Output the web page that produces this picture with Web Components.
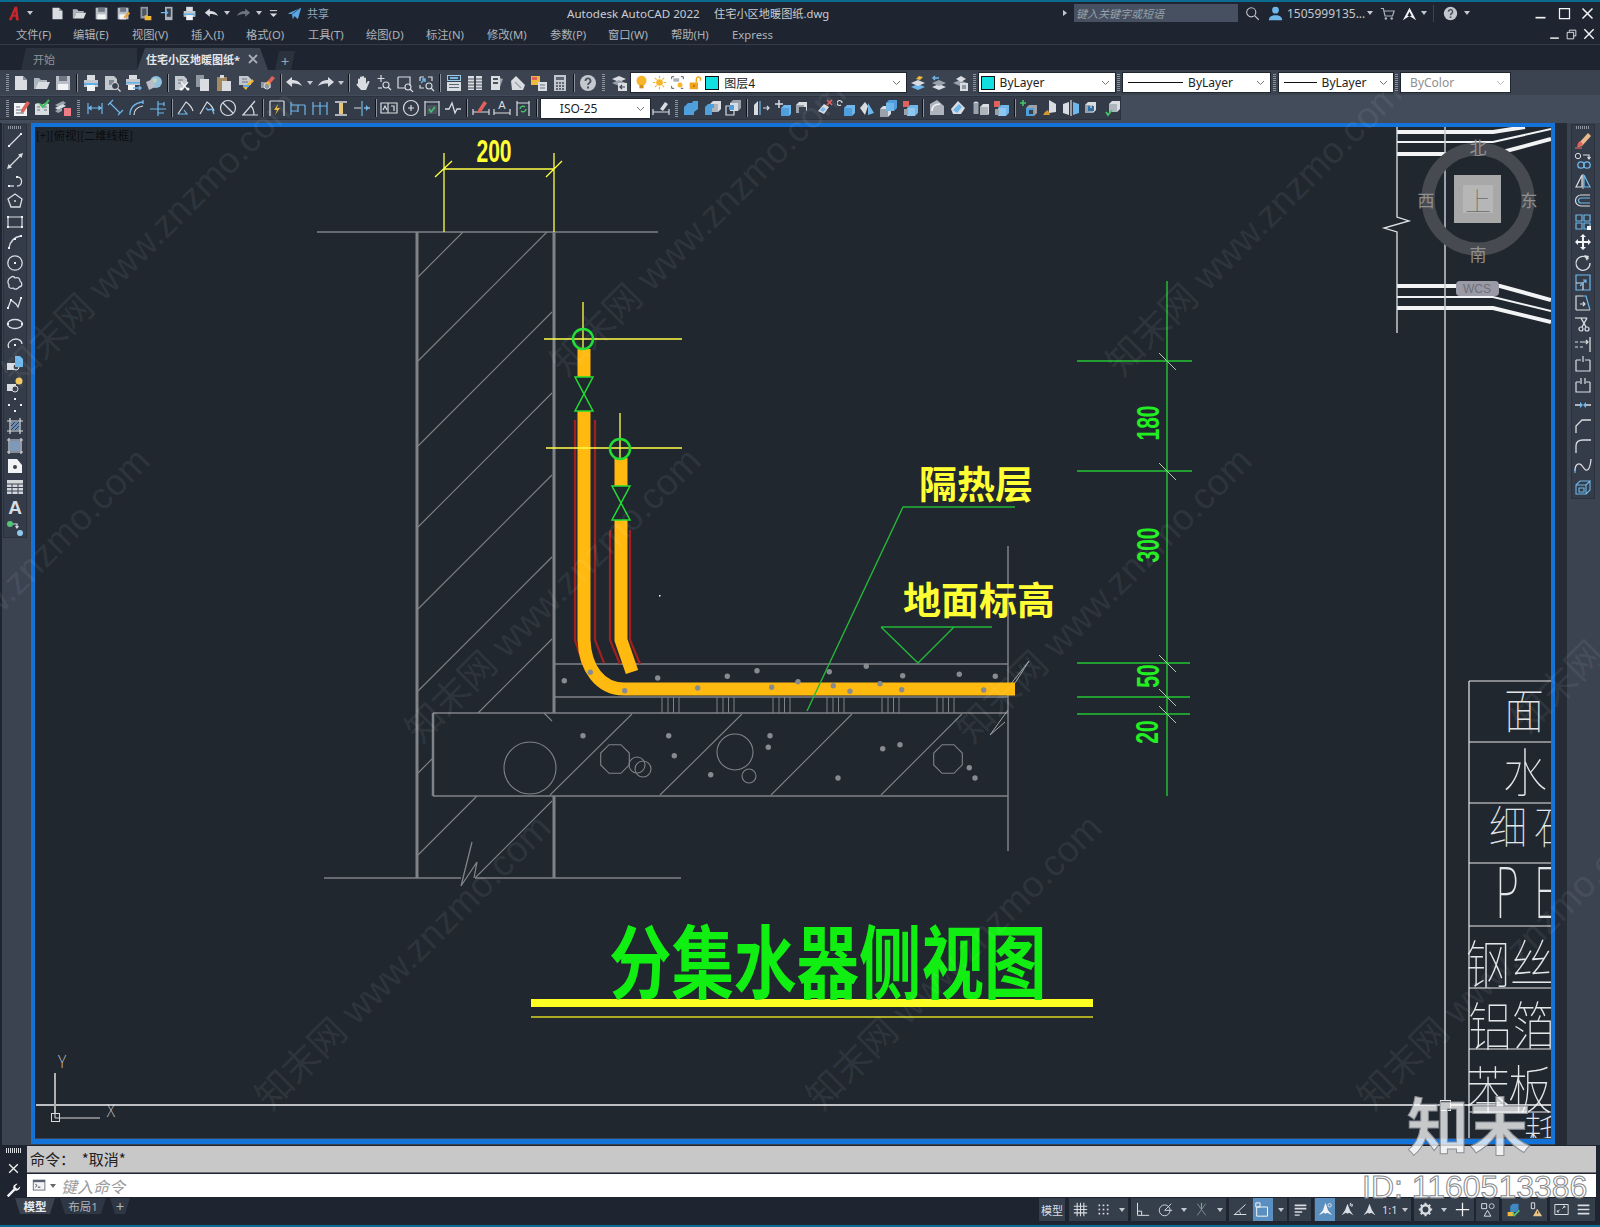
<!DOCTYPE html>
<html lang="zh">
<head>
<meta charset="utf-8">
<title>Autodesk AutoCAD 2022</title>
<style>
    html, body { margin: 0; height: 100%; background: #1f2530; overflow: hidden; }
    body { font-family: "Noto Sans", "Noto Sans CJK SC", sans-serif; }
</style>
</head>
<body>
<cad-app>
    <cad-titlebar></cad-titlebar>
    <cad-menubar></cad-menubar>
    <cad-tabs></cad-tabs>
    <cad-ribbon>
        <cad-toolbar>
            <cad-grip></cad-grip>
            <cad-icon name="new"></cad-icon><cad-icon name="open"></cad-icon><cad-icon name="save"></cad-icon><cad-sep></cad-sep>
            <cad-icon name="print"></cad-icon><cad-icon name="preview"></cad-icon><cad-icon name="plot"></cad-icon><cad-icon name="publish"></cad-icon><cad-sep></cad-sep>
            <cad-icon name="cut"></cad-icon><cad-icon name="copy"></cad-icon><cad-icon name="paste"></cad-icon><cad-icon name="match"></cad-icon><cad-icon name="block"></cad-icon><cad-sep></cad-sep>
            <cad-icon name="undo"></cad-icon><cad-drop></cad-drop><cad-icon name="redo"></cad-icon><cad-drop></cad-drop><cad-sep></cad-sep>
            <cad-icon name="pan"></cad-icon><cad-icon name="zoomrt"></cad-icon><cad-icon name="zoomw"></cad-icon><cad-icon name="zoomp"></cad-icon><cad-sep></cad-sep>
            <cad-icon name="props"></cad-icon><cad-icon name="design"></cad-icon><cad-icon name="palette"></cad-icon><cad-icon name="sheet"></cad-icon><cad-icon name="markup"></cad-icon><cad-icon name="calc"></cad-icon><cad-sep></cad-sep>
            <cad-icon name="help"></cad-icon><cad-grip wide></cad-grip>
            <cad-icon name="layerprev"></cad-icon>
            <cad-combo w="277">
                <cad-icon name="bulb" size="15"></cad-icon><cad-icon name="sun" size="15"></cad-icon><cad-icon name="frame" size="15"></cad-icon><cad-icon name="lock" size="15"></cad-icon><cad-swatch></cad-swatch>图层4
            </cad-combo>
            <cad-icon name="layers1"></cad-icon><cad-icon name="layers2"></cad-icon><cad-icon name="layers3"></cad-icon><cad-grip></cad-grip>
            <cad-combo w="138"><cad-swatch></cad-swatch>ByLayer</cad-combo><cad-grip></cad-grip>
            <cad-combo w="149"><cad-rule w="55"></cad-rule>ByLayer</cad-combo><cad-grip></cad-grip>
            <cad-combo w="116"><cad-rule w="33"></cad-rule>ByLayer</cad-combo><cad-grip></cad-grip>
            <cad-combo w="111" muted>ByColor</cad-combo>
        </cad-toolbar>
        <cad-toolbar second>
            <cad-grip></cad-grip>
            <cad-icon name="edittext"></cad-icon><cad-icon name="checkbook"></cad-icon><cad-icon name="layerred"></cad-icon><cad-grip wide></cad-grip>
            <cad-icon name="dimlin"></cad-icon><cad-icon name="dimali"></cad-icon><cad-icon name="dimarc"></cad-icon><cad-icon name="dimord"></cad-icon><cad-sep></cad-sep>
            <cad-icon name="dimrad"></cad-icon><cad-icon name="dimjog"></cad-icon><cad-icon name="dimdia"></cad-icon><cad-icon name="dimang"></cad-icon><cad-sep></cad-sep>
            <cad-icon name="dimq"></cad-icon><cad-icon name="dimbase"></cad-icon><cad-icon name="dimcont"></cad-icon><cad-icon name="dimspace"></cad-icon><cad-icon name="dimbreak"></cad-icon><cad-sep></cad-sep>
            <cad-icon name="tol"></cad-icon><cad-icon name="center"></cad-icon><cad-icon name="inspect"></cad-icon><cad-icon name="jog"></cad-icon><cad-sep></cad-sep>
            <cad-icon name="dimedit"></cad-icon><cad-icon name="dimtext"></cad-icon><cad-icon name="dimup"></cad-icon><cad-sep></cad-sep>
            <cad-combo w="111" small>ISO-25</cad-combo>
            <cad-icon name="dimstyle"></cad-icon><cad-grip narrow></cad-grip>
            <cad-icon name="union"></cad-icon><cad-icon name="subtract"></cad-icon><cad-icon name="intersect"></cad-icon><cad-sep></cad-sep>
            <cad-icon name="s1"></cad-icon><cad-icon name="s2"></cad-icon><cad-icon name="s3"></cad-icon><cad-icon name="s4"></cad-icon><cad-icon name="s5"></cad-icon><cad-icon name="s6"></cad-icon><cad-icon name="s7"></cad-icon><cad-icon name="s8"></cad-icon><cad-sep></cad-sep>
            <cad-icon name="s9"></cad-icon><cad-icon name="s10"></cad-icon><cad-icon name="s11"></cad-icon><cad-icon name="s8"></cad-icon><cad-sep></cad-sep>
            <cad-icon name="s12"></cad-icon><cad-icon name="s13"></cad-icon><cad-icon name="s14"></cad-icon><cad-icon name="s15"></cad-icon><cad-icon name="s16"></cad-icon>
        </cad-toolbar>
    </cad-ribbon>
    <cad-workspace>
        <cad-rail slot="left">
            <cad-icon name="line" tall></cad-icon><cad-icon name="xline" tall></cad-icon><cad-icon name="pline" tall></cad-icon><cad-icon name="polygon" tall></cad-icon><cad-icon name="rect" tall></cad-icon><cad-icon name="arc" tall></cad-icon><cad-icon name="circle" tall></cad-icon><cad-icon name="cloud" tall></cad-icon><cad-icon name="spline" tall></cad-icon><cad-icon name="ellipse" tall></cad-icon><cad-icon name="ellarc" tall></cad-icon><cad-icon name="insert" tall></cad-icon><cad-icon name="mkblock" tall></cad-icon><cad-icon name="point" tall></cad-icon><cad-icon name="hatch" tall></cad-icon><cad-icon name="gradient" tall></cad-icon><cad-icon name="region" tall></cad-icon><cad-icon name="table" tall></cad-icon><cad-icon name="mtext" tall></cad-icon><cad-icon name="addsel" tall></cad-icon>
        </cad-rail>
        <cad-viewport></cad-viewport>
        <cad-rail slot="right" right>
            <cad-icon name="erase" tall></cad-icon><cad-icon name="copyobj" tall></cad-icon><cad-icon name="mirror" tall></cad-icon><cad-icon name="offset" tall></cad-icon><cad-icon name="array" tall></cad-icon><cad-icon name="move" tall></cad-icon><cad-icon name="rotate" tall></cad-icon><cad-icon name="scale" tall></cad-icon><cad-icon name="stretch" tall></cad-icon><cad-icon name="trim" tall></cad-icon><cad-icon name="extend" tall></cad-icon><cad-icon name="breakpt" tall></cad-icon><cad-icon name="break" tall></cad-icon><cad-icon name="join" tall></cad-icon><cad-icon name="chamfer" tall></cad-icon><cad-icon name="fillet" tall></cad-icon><cad-icon name="blend" tall></cad-icon><cad-icon name="explode" tall></cad-icon>
        </cad-rail>
    </cad-workspace>
    <cad-command></cad-command>
    <cad-status></cad-status>
    <cad-watermark></cad-watermark>
</cad-app>

<script>
const LT = '#d9dce1', GR = '#9aa2ac', BL = '#6fb7ea', YE = '#f0b93a', RD = '#e0625c', WH = '#f2f3f5';
const st = (d, c = LT, w = 1.2) => `<path d="${d}" fill="none" stroke="${c}" stroke-width="${w}"/>`;
const fl = (d, c = LT) => `<path d="${d}" fill="${c}"/>`;
const dt = (x, y, c = '#eef0f3') => `<rect x="${x - 1}" y="${y - 1}" width="2" height="2" fill="${c}"/>`;
const lens = (x, y) => `<circle cx="${x}" cy="${y}" r="3" fill="none" stroke="${LT}" stroke-width="1.1"/>` + st(`M${x + 2} ${y + 2}l3 3`);
const dim = inner => st('M2 4v11M16 4v11', BL) + inner;
const box3 = (x, y, c1, c2) => fl(`M${x} ${y + 3}l3-3h8v8l-3 3H${x}z`, c1) + fl(`M${x} ${y + 3}h8v8H${x}z`, c2);

const ICONS = {
    logo: fl('M1 17L8 1h3l2 16H9.5l-.3-4H6l-1.7 4z', '#c9262c') + fl('M7 10.5h2l-.2-4z', '#1f2530'),
    new: fl('M3 2h8l4 4v10H3z') + fl('M11 2l4 4h-4z', '#858d98'),
    open: fl('M1 15V4h5l2 2h6v2H5L3 15z', '#aeb4bc') + fl('M5 8h12l-3 7H2.5z'),
    save: fl('M2 2h14v14H2z', '#b9bec6') + fl('M5 2h8v5H5z', '#6f7783') + fl('M4 10h10v6H4z', WH),
    saveas: fl('M2 2h13v14H2z', '#b9bec6') + fl('M5 2h7v5H5z', '#6f7783') + fl('M4 10h8v6H4z', WH) + fl('M9 15l1-3 5-5 2 2-5 5z', '#e9a13b'),
    sheetset: fl('M3 1h9v14H3z', '#8f97a1') + fl('M5 3h5v9H5z', '#4e5663') + fl('M8 11h3l1 1h4v5H8z', YE),
    mobile: fl('M6 1h9v16H6z', '#aeb4bc') + fl('M8 3h5v10H8z', '#39414d') + st('M1 8h8M7 6l2 2-2 2', BL, 1.5),
    print: fl('M5 1h8v5H5z') + fl('M2 6h14v7H2z', '#c3c8ce') + fl('M2 9h14v2H2z', '#5fb0e8') + fl('M5 11h8v6H5z', WH),
    undo: fl('M1 8l6-5v3c5 0 8 2 10 6-3-2-6-2.5-10-2.5V13z'),
    redo: fl('M17 8l-6-5v3C6 6 3 8 1 12c3-2 6-2.5 10-2.5V13z'),
    redooff: fl('M17 8l-6-5v3C6 6 3 8 1 12c3-2 6-2.5 10-2.5V13z', '#6b7380'),
    customize: st('M4 5h10', LT, 1.4) + fl('M4 9h10l-5 5z'),
    share: fl('M1 9L17 2l-4 14-4-4-2 4-1-6z', '#5aa9e6') + st('M6 10l9-7', '#1f2530', .8),
    preview: fl('M2 2h9l3 3v11H2z', '#c3c8ce') + fl('M6 6h5v5H6z', '#7f8792') + `<circle cx="12" cy="12" r="3.5" fill="#39414d" stroke="${LT}"/>` + st('M14.5 14.5l3 3'),
    plot: fl('M5 1h8v4H5z') + fl('M2 5h14v6H2z', '#c3c8ce') + fl('M2 8h14v1.5H2z', '#5fb0e8') + fl('M4 11h7v5H4z', WH) + st('M9 14h8M15 12l2 2-2 2', BL, 1.4),
    publish: `<circle cx="11" cy="8" r="6" fill="#8fc0dc"/>` + fl('M8 4l4 1-1 4-3-1z', '#c8d5b8') + fl('M1 8l7-3 2 8-6 3z', '#b9bec6'),
    cut: fl('M2 2h9l3 3v5l-4 6H2z', '#c3c8ce') + st('M5 6h5M5 9h4', '#6b7380') + st('M8 8l7 8M15 8l-7 8', '#f2f3f5', 1.3) + `<circle cx="8" cy="15" r="1.5" fill="#f2f3f5"/><circle cx="15" cy="15" r="1.5" fill="#f2f3f5"/>`,
    copy: fl('M2 1h8v12H2z', '#8f97a1') + fl('M6 5h9v12H6z'),
    paste: fl('M2 3h10v14H2z', '#a38a63') + fl('M5 1h4v3H5z') + fl('M7 7h9v10H7z'),
    match: fl('M2 2h9l3 3v6H2z', '#c3c8ce') + st('M5 5h5M5 8h6', '#6b7380') + fl('M6 13l3-2 6-6 2 2-6 6-2 3z', YE) + fl('M6 11h6v2H6z', '#5aa9e6'),
    block: fl('M3 8h10v6H3z', '#8f97a1') + `<circle cx="9" cy="12" r="3" fill="none" stroke="${LT}"/>` + fl('M8 9l6-7 3 2-6 7z', RD) + fl('M8 9l2-2 2 2-1 2z', YE),
    pan: fl('M4 10V5.5a1 1 0 0 1 2 0V9V3.5a1 1 0 0 1 2 0V9V3a1 1 0 0 1 2 0v6V4.5a1 1 0 0 1 2 0V10l1.5-2.5c1-1 2.5 0 1.8 1L12 16H7L3 11.5C2 10 3 9 4 10z'),
    zoomrt: st('M6 1v7M2.5 4.5h7') + st('M3 14h4') + lens(11, 11),
    zoomw: st('M2 3h12v9M2 3v11h7') + lens(12, 13),
    zoomp: st('M2 3h4M10 3h4v4M2 3v4M2 11v3h4', LT) + st('M3 9l4-4M4 5h3v3', BL, 1.4) + lens(11, 12),
    props: fl('M2 1h14v6H2z', '#9cc9e8') + fl('M3 2h12v4H3z', '#3c4452') + fl('M5 3h8v2H5z', BL) + fl('M2 8h14v9H2z') + fl('M4 10h10v1H4zM4 13h10v1H4z', '#5d6672'),
    design: fl('M2 2h6v14H2zM10 2h6v14h-6z') + st('M2 5h6M2 8h6M2 11h6M2 14h6M10 5h6M10 8h6M10 11h6M10 14h6', '#4a525e', 1.2),
    palette: fl('M3 2h9v14H3z') + fl('M12 4l3 1-3 8z', GR) + fl('M5 4h5v2H5zM5 8h5v2H5z', '#4a525e'),
    sheet: fl('M2 7L7 2l9 9-2 5H3z') + st('M6 8l6 6', GR),
    markup: fl('M1 2h9v9H1z', YE) + fl('M8 8h9v9H8z') + fl('M2 3h5v3H2z', RD) + st('M10 11h5M10 14h5', '#6b7380'),
    calc: fl('M3 1h12v16H3z', '#c3c8ce') + fl('M5 3h8v3H5z', '#5d6672') + fl('M5 8h2v2H5zM8 8h2v2H8zM11 8h2v2h-2zM5 11h2v2H5zM8 11h2v2H8zM11 11h2v2h-2zM5 14h2v2H5zM8 14h2v2H8zM11 14h2v2h-2z', '#5d6672'),
    help: `<circle cx="9" cy="9" r="8" fill="#c3c8ce"/>` + st('M6.5 7a2.5 2.5 0 1 1 3.8 2c-1 .6-1.3 1-1.3 2', '#4a525e', 1.8) + fl('M8 12.5h2v2H8z', '#4a525e'),
    layerprev: fl('M2 5l7-3 7 3-7 3z') + fl('M2 9l7-3 7 3-7 3z', GR) + fl('M8 9h9v8H8z') + st('M10 13h5M12 11l-2 2 2 2', '#39414d'),
    bulb: `<circle cx="9" cy="7" r="6" fill="#f7b52a"/>` + fl('M6.5 12h5v4h-5z', '#d38f1d'),
    sun: `<circle cx="9" cy="9" r="4" fill="#f7b52a"/>` + st('M9 1v3M9 14v3M1 9h3M14 9h3M3.5 3.5l2 2M12.5 12.5l2 2M14.5 3.5l-2 2M5.5 12.5l-2 2', '#f7b52a', 1.4),
    frame: st('M2 2h3M2 2v3M16 2h-3M16 2v3M2 16h3M2 16v-3M16 16h-3', '#55606c', 1.2) + `<circle cx="12" cy="12" r="3" fill="#f7b52a"/>` + fl('M4 4h7v4H4z', '#a9b0b8'),
    lock: fl('M2 9h10v8H2z', '#f0a419') + st('M10 9V5a2.5 2.5 0 0 1 5 0v2', '#f0a419', 1.8) + fl('M6 12h2v2H6z', '#a66a0a'),
    layers1: fl('M2 13l7-3 7 3-7 3z', BL) + fl('M2 9l7-3 7 3-7 3z', LT) + fl('M7 5l3-3 4 1-3 3z', YE),
    layers2: fl('M2 13l7-3 7 3-7 3z', LT) + fl('M2 9l7-3 7 3-7 3z', GR) + st('M3 4h6M5 2L3 4l2 2', BL, 1.4),
    layers3: fl('M2 9l7-3 7 3-7 3z', GR) + fl('M5 5l5-3 5 3-5 3z', LT) + fl('M9 9h8v8H9z') + st('M11 12h4M11 14h4', '#4a525e'),
    edittext: fl('M2 4h13v13H2z', WH) + st('M4 8h4M4 11h6M4 14h8', '#6b7380') + fl('M9 11l6-9 3 2-6 9-3 1z', RD),
    checkbook: fl('M2 5c2-1 5-1 7 1 2-2 5-2 7-1v11H2z') + st('M4 8h3M4 11h3M11 8h3M11 11h3', '#6b7380') + st('M7 5l3 3 6-7', '#40c060', 2),
    layerred: fl('M1 6l8-4 3 2-8 4z', GR) + fl('M1 9l8-4 3 2-8 4z', LT) + fl('M10 9h7v8h-7z', '#ee7c86') + fl('M1 12l7-3v3l-4 2z', GR),
    dimlin: dim(st('M2 9h14M3 9l2-1.5v3zM15 9l-2-1.5v3z', BL)),
    dimali: st('M1 6l5-5M11 16l5-5', BL) + st('M3 4l10 10', BL),
    dimarc: st('M2 16c0-8 5-12 13-13M15 1v4', BL, 1.3) + st('M6 16c0-5 3-8 9-9', LT),
    dimord: st('M1 10h16M9 2v15M9 5h6M9 14h6M15 3v4', BL),
    dimrad: st('M1 15L9 3c3 2 6 6 7 9', LT) + st('M1 15h9l-3-4', BL),
    dimjog: st('M2 15L9 3c3 2 6 6 7 9', LT) + st('M8 9l2 2 4-1 2 5', BL, 1.3),
    dimdia: `<circle cx="9" cy="9" r="7.5" fill="none" stroke="${LT}" stroke-width="1.2"/>` + st('M4 4l10 10', LT),
    dimang: st('M1 16h16M2 16L14 2M10 7c2 2 3 5 3 9', LT),
    dimq: st('M2 2h14M2 2v15M16 2v15', LT) + fl('M10 5l-4 6h3l-2 5 5-7H9z', YE),
    dimbase: st('M2 3v13M16 6v10M9 6v7M2 6h14M2 12h7', BL),
    dimcont: st('M2 3v13M9 3v13M16 3v13M2 7h14', BL),
    dimspace: st('M3 3h12M3 16h12', LT, 1.4) + fl('M7 4h4v11H7z', '#e8c878'),
    dimbreak: st('M1 9h7M11 9h6', LT) + st('M9 2v15', BL) + fl('M13 6v6l3-3z', BL),
    tol: st('M1 4h16v10H1zM8 4v10', LT) + st('M3 11l2-4 2 4', LT) + st('M11 7h3v5', LT),
    center: `<circle cx="9" cy="9" r="7.5" fill="none" stroke="${LT}" stroke-width="1.2"/>` + st('M9 6v6M6 9h6', LT),
    inspect: st('M2 2v15M16 2v15M2 3h14', LT) + fl('M4 6h10v9H4z', '#49525e') + st('M6 10l2 3 4-5', '#45c46a', 1.5),
    jog: st('M1 10h4l3-6 3 10 2-4h4', LT, 1.3),
    dimedit: st('M1 10v6M17 10v6M1 13h16', LT) + fl('M6 11l6-9 3 2-6 9-3 1z', RD),
    dimtext: st('M1 10v6M17 10v6M1 14h16', LT) + `<text x="9" y="10" text-anchor="middle" font-size="11" font-family="Liberation Sans" fill="${LT}">A</text>`,
    dimup: st('M3 2v15M15 2v15M3 4h12', LT) + st('M6 10a3 3 0 0 1 5-2M12 10a3 3 0 0 1-5 2', '#45c46a', 1.4),
    dimstyle: st('M1 10v6M17 10v6M1 13h16', LT) + fl('M8 10l5-7 3 2-5 7z', LT),
    union: fl('M3 7l3-3h4l1-2h5v8l-4 3v3H2V8z', '#4f9fdd') + fl('M3 8h9v8H3z', '#4f9fdd'),
    subtract: box3(7, 2, LT, '#aeb4bc') + fl('M2 8l3-3h6v4H9v7H2z', '#4f9fdd'),
    intersect: box3(6, 1, GR, LT) + st('M2 7h8v9H2z', LT) + fl('M5 6h5v5H5z', '#4f9fdd'),
    s1: fl('M2 16V6l4-4v14z', LT) + st('M8 2v14', BL) + st('M11 9h6M15 7l2 2-2 2', LT),
    s2: st('M6 1v8M2 5h8', LT, 1.5) + box3(8, 6, BL, '#4f9fdd'),
    s3: box3(2, 3, LT, GR) + fl('M5 8h7v7H5z', '#39414d'),
    s4: fl('M2 12l6-7 5 3-5 7z', LT) + fl('M4 11l3-3 3 2-3 3z', BL) + st('M11 1l5 5M16 1l-5 5', RD, 1.6),
    s5: st('M5 4a2.5 2.5 0 1 0-1 2', LT) + box3(7, 6, BL, '#4f9fdd'),
    s6: fl('M2 9l5-6 3 4-3 9z', LT) + fl('M10 4l6 10-6 2z', BL),
    s7: box3(1, 7, LT, GR) + box3(7, 1, '#4f9fdd', BL),
    s8: fl('M2 2h6v6H2z', RD) + box3(6, 6, BL, '#8fc8ef') + fl('M3 10h4v6H3z', GR),
    s9: fl('M9 1l7 6v9H2V5z', '#aeb4bc') + st('M4 12c0-5 3-7 8-7', WH, 1.5),
    s10: fl('M2 10l7-8 7 7-4 6H4z', LT) + fl('M4 11l6-6 3 3-5 6z', BL),
    s11: `<ellipse cx="5" cy="4" rx="2.5" ry="1.5" fill="${LT}"/>` + fl('M2.5 4h5v11h-5z', GR) + box3(9, 5, LT, '#aeb4bc'),
    s12: st('M1 4h6M4 1v6', '#45c46a', 1.6) + box3(7, 6, GR, '#4f9fdd') + fl('M10 11h4v4h-4z', '#39414d'),
    s13: fl('M8 1l7 4v8l-7 1z', LT) + fl('M4 13l3-2 2 5H2z', '#d49b2c'),
    s14: fl('M1 5l6-2v13l-6-2z', LT) + st('M9 1v16', LT) + fl('M11 3l6 2v9l-6 2z', BL),
    s15: box3(2, 3, LT, GR) + fl('M5 7h6v5H5z', '#2f6fa5') + st('M8 4v5', LT),
    s16: box3(5, 2, LT, '#aeb4bc') + st('M2 13l2 3 4-5', '#45c46a', 1.8),
    line: st('M3 15L15 3', LT, 1.3) + dt(3, 15) + dt(15, 3),
    xline: st('M4 14L14 4', LT, 1.3) + fl('M17 1l-1.5 5-3.5-3.5zM1 17l1.5-5 3.5 3.5z'),
    pline: st('M3 14h5', LT, 1.3) + st('M11 14c6 0 6-9 .5-9', LT, 1.3) + dt(3, 14) + dt(11, 5),
    polygon: st('M9 2l7 5-2 8H5L2 7z', LT, 1.3) + `<circle cx="9" cy="9" r="1" fill="${LT}"/>`,
    rect: st('M2 4h14v10H2z', LT, 1.2) + dt(2, 4) + dt(16, 4) + dt(2, 14) + dt(16, 14),
    arc: st('M3 15C4 9 8 4 15 3', LT, 1.3) + dt(3, 15) + dt(9, 6) + dt(15, 3),
    circle: `<circle cx="9" cy="9" r="7.2" fill="none" stroke="${LT}" stroke-width="1.3"/>` + dt(9, 9),
    cloud: st('M4 4c2-2 4-2 5 0 3-1 5 0 5 3 3 2 2 6-1 6-1 2-4 3-6 1-3 1-5-1-4-3-2-2-1-6 1-7z', LT, 1.3),
    spline: st('M2 14l3-8 5 4 2 3 3-9', LT, 1.3) + dt(2, 14) + dt(5, 6) + dt(15, 4),
    ellipse: `<ellipse cx="9" cy="9" rx="7.5" ry="4.5" fill="none" stroke="${LT}" stroke-width="1.3"/>` + dt(2, 9) + dt(16, 9),
    ellarc: st('M3 13C0 8 6 4 10 4c3 0 6 2 6 5', LT, 1.3) + dt(9, 10),
    insert: fl('M1 8h9v7H1z', LT) + `<circle cx="10" cy="12" r="3" fill="#3c4452" stroke="${LT}"/>` + fl('M9 1h5l3 3v8H9z', BL),
    mkblock: fl('M1 8h9v7H1z', LT) + `<circle cx="9" cy="13" r="3" fill="#3c4452" stroke="${LT}"/>` + `<circle cx="13" cy="5" r="3.5" fill="#f0c860"/>`,
    point: dt(9, 3) + dt(3, 9) + dt(15, 9) + dt(9, 15),
    hatch: st('M1 4h16M1 14h16M4 1v16M14 1v16', LT) + fl('M5 5h8v8H5z', '#6d8bb0') + st('M5 9l4-4M5 13l8-8M9 13l4-4', '#1f2a3a', .8),
    gradient: st('M1 3h16M1 15h16M3 1v16M15 1v16', LT) + `<rect x="4" y="4" width="10" height="10" fill="#7f99ba"/>`,
    region: fl('M2 2h9l5 6v8H2z', WH) + `<circle cx="9" cy="10" r="2" fill="#39414d"/>`,
    table: fl('M1 2h16v14H1z', '#d4d7dc') + st('M1 6h16M1 9.5h16M1 13h16M6 6v10M12 6v10', '#3c4452', 1),
    mtext: `<text x="9" y="16" text-anchor="middle" font-size="19" font-weight="700" font-family="Liberation Sans" fill="${LT}">A</text>`,
    addsel: `<circle cx="4" cy="5" r="3" fill="#53c678"/><circle cx="14" cy="14" r="3" fill="#8fc8ef"/>` + st('M7 5h4v3M9.5 7l1.5 2 1.5-2', LT),
    erase: fl('M5 12L14 2l3 3-9 10-4 1z', '#e9b98a') + fl('M4 12l2-2 3 3-2 2-4 1z', RD) + st('M1 17h7', RD),
    copyobj: `<circle cx="4" cy="4" r="2.7" fill="none" stroke="${LT}"/>` + st('M9 3h6v3M13.5 5l1.5 2 1.5-2', LT) + `<circle cx="7" cy="13" r="3.2" fill="none" stroke="${BL}" stroke-width="1.3"/><circle cx="13" cy="13" r="3.2" fill="none" stroke="${BL}" stroke-width="1.3"/>`,
    mirror: st('M8 15H2L8 3z', LT, 1.2) + st('M9 2v15', LT, .9) + st('M10 15h6l-6-12z', BL, 1.2),
    offset: st('M16 3H7a5.5 5.5 0 0 0 0 11h9', LT, 1.2) + st('M16 6H7a2.5 2.5 0 0 0 0 5h9', BL, 1.2),
    array: st('M2 2h6v6H2zM10 2h6v6h-6zM2 10h6v6H2zM10 10h6v6h-6z', BL, 1.2) + fl('M13 13h4v4h-4z', WH),
    move: fl('M9 1l3 3h-2v4h4V6l3 3-3 3v-2h-4v4h2l-3 3-3-3h2v-4H4v2L1 9l3-3v2h4V4H6z', WH),
    rotate: st('M14.5 5A7 7 0 1 0 16 9', LT, 1.3) + fl('M10 1l5 1-2 5z', LT),
    scale: st('M2 1h14v15H2z', BL, 1.2) + st('M2 9h7v7', LT, 1.2) + st('M6 12l6-6M9 6h3v3', BL),
    stretch: st('M2 16V2h7M2 16h14', LT, 1.2) + st('M9 2h3l4 14', BL, 1.2) + st('M6 10h5M9 8l2 2-2 2', LT),
    trim: st('M1 3h12', WH, 1) + st('M7 3l5 9M13 3l-5 9', LT, 1.4) + `<circle cx="7" cy="14" r="2" fill="none" stroke="${LT}" stroke-width="1.2"/><circle cx="13" cy="14" r="2" fill="none" stroke="${LT}" stroke-width="1.2"/>`,
    extend: st('M16 2v15', LT, 1.3) + st('M1 12h3M6 12h3', LT) + st('M1 7h3M6 7h8M12 5l2 2-2 2', LT),
    breakpt: st('M2 5h5M11 5h5M16 5v11H2V5', LT, 1.2) + st('M9 1v6', LT),
    break: st('M2 6h4M12 6h4M16 6v10H2V6', LT, 1.2) + st('M7 2v6M11 2v6', LT),
    join: st('M1 9h5M12 9h5', LT, 1.3) + fl('M6 6l3 3-3 3zM12 6L9 9l3 3z', BL),
    chamfer: st('M2 16v-7l6-6h9', LT, 1.3),
    fillet: st('M2 16V9c0-4 3-6 7-6h8', LT, 1.3),
    blend: st('M1 14c0-8 5-9 8-4s7 5 8-8', LT, 1.3) + st('M1 16v-4', BL),
    explode: st('M2 7h10v9H2zM12 7l4-4v9l-4 4M2 7l4-4h10', BL, 1.1) + st('M5 10h5v4H5z', BL, 1.1),
    grid: st('M1 5h16M1 9h16M1 13h16M5 1v16M9 1v16M13 1v16', LT, 1.3),
    snap: `<g fill="${LT}">` + [3, 8, 13].flatMap(x => [3, 8, 13].map(y => `<rect x="${x}" y="${y}" width="2" height="2"/>`)).join('') + `</g>`,
    ortho: st('M3 1v15h14M3 11h5v5', LT, 1.2),
    polar: `<circle cx="8" cy="10" r="6.5" fill="none" stroke="${LT}" stroke-width="1.1"/>` + st('M8 10h9M8 10l8-8', LT, 1.1),
    track: st('M4 2l10 14M14 2L4 16', '#7f8792', 1.2) + st('M9 1v8', '#5dbb63', 1.4),
    angle: st('M1 15h15M2 15L15 3', LT, 1.2) + st('M9 15c0-2-1-3-2-4', LT),
    osnap: st('M2 6h13v11H2z', WH, 1.2) + st('M1 1h5v5H1z', WH, 1.2),
    lw: fl('M2 3h14v2H2zM2 7h14v2H2zM2 11h9v2H2zM2 15h6v1.5H2z', LT),
    annoA: fl('M9 1l3 9 5 6-6-3-2 1-2-1-6 3 5-6z', WH) + `<circle cx="14" cy="4" r="2" fill="none" stroke="${WH}"/>`,
    annoB: fl('M9 2l3 8 4 6-5-3-2 1-2-1-5 3 4-6z', LT) + st('M13 1l-1 3 3-1-1 3', LT),
    annoC: fl('M9 2l3 8 4 6-5-3-2 1-2-1-5 3 4-6z', LT),
    gear: `<circle cx="9" cy="9" r="5" fill="none" stroke="${LT}" stroke-width="3"/>` + st('M9 1v3M9 14v3M1 9h3M14 9h3M3.3 3.3l2.2 2.2M12.5 12.5l2.2 2.2M14.7 3.3l-2.2 2.2M5.5 12.5l-2.2 2.2', LT, 2.4),
    plus: st('M9 1v16M1 9h16', WH, 1.5),
    wspace: st('M2 2h6v6H2z', LT) + `<circle cx="14" cy="5" r="3" fill="none" stroke="${LT}"/>` + st('M9 10l4 7H5z', LT),
    iso: fl('M8 2h7v7l-3 3H5V5z', '#3f88c5') + fl('M2 12h7v5H2z', YE) + st('M8 13l2 3 6-6', '#53c678', 2),
    warn: st('M4 1h4v7H4z', LT) + fl('M11 8l6 9H6z', '#ecc58a') + fl('M11 11h1.2v3H11z', '#4a3a1a'),
    full: st('M1 3h16v12H1z', LT, 1.2) + st('M4 12l3-3M10 8l3-3M11 5h2v2M4 10v2h2', LT),
    menu: fl('M2 3h14v2H2zM2 8h14v2H2zM2 13h14v2H2z', LT),
    consoleicon: fl('M1 2h15v13H1z', '#596170') + fl('M2 5h13v9H2z', WH) + st('M4 7l2 2-2 2M7 11h3', '#444'),
    wrench: fl('M1 15l8-8c-1-3 1-6 5-6l-3 3 1 2 2 1 3-3c0 4-3 6-6 5l-8 8z', WH),
    cart: st('M1 3h3l2 9h9l2-6H5', '#aeb4bc', 1.4) + `<circle cx="7" cy="15" r="1.5" fill="#aeb4bc"/><circle cx="14" cy="15" r="1.5" fill="#aeb4bc"/>`,
    user: `<circle cx="9" cy="5" r="4" fill="#6fb7ea"/>` + fl('M1 17c0-4 3-6 8-6s8 2 8 6z', BL),
    search: `<circle cx="7.5" cy="7.5" r="5.5" fill="none" stroke="#c3c8ce" stroke-width="1.3"/>` + st('M11.5 11.5l5 5', '#c3c8ce', 1.4),
    anno: fl('M9 2l8 15-8-5-8 5z', WH) + fl('M9 7l2.5 5h-5z', '#1f2530'),
    min: fl('M3 13h12v2H3z', WH),
    max: st('M3 3h12v12H3z', WH, 1.5),
    close: st('M3 3l12 12M15 3L3 15', WH, 1.8),
    restore: st('M6 5V3h9v8h-3', WH, 1.2) + st('M3 6h9v9H3z', WH, 1.2)
};

class CadIcon extends HTMLElement {
    connectedCallback() {
        const size = this.getAttribute('size') || 18;
        const tall = this.hasAttribute('tall');
        const host = this.hasAttribute('size')
            ? `width:${+size + 3}px;height:100%;`
            : tall ? 'width:24px;height:20.4px;' : 'width:21.3px;height:100%;';
        this.attachShadow({ mode: 'open' });
        this.shadowRoot.innerHTML = `
            <style>
                :host { display: flex; align-items: center; justify-content: center; flex: none; ${host} }
                svg { display: block; }
            </style>
            <svg width="${size}" height="${size}" viewBox="0 0 18 18">${ICONS[this.getAttribute('name')] || ''}</svg>`;
    }
}

class CadDrop extends HTMLElement {
    constructor() {
        super();
        this.attachShadow({ mode: 'open' });
        this.shadowRoot.innerHTML = `
            <style>
                :host { display: flex; align-items: center; justify-content: center; flex: none; width: 10px; height: 100%; }
                i { width: 0; height: 0; border: 3px solid transparent; border-top: 4px solid var(--drop, #c3c8ce); border-bottom: 0; }
            </style>
            <i></i>`;
    }
}

class CadSep extends HTMLElement {
    constructor() {
        super();
        this.attachShadow({ mode: 'open' });
        this.shadowRoot.innerHTML = `
            <style>
                :host { display: flex; justify-content: center; align-items: center; flex: none; width: 6px; height: 100%; }
                i { width: 2px; height: 18px; background: #0f141b; border-right: 1px solid #8a919b; box-sizing: border-box; }
            </style>
            <i></i>`;
    }
}

class CadGrip extends HTMLElement {
    connectedCallback() {
        const w = this.hasAttribute('wide') ? 10 : this.hasAttribute('narrow') ? 8 : 6;
        this.attachShadow({ mode: 'open' });
        this.shadowRoot.innerHTML = `
            <style>
                :host { display: flex; justify-content: center; align-items: center; flex: none; width: ${w}px; height: 100%; }
                i { width: 3px; height: 17px; background: repeating-linear-gradient(#8d949e 0 1px, transparent 1px 2px); }
            </style>
            <i></i>`;
    }
}

class CadSwatch extends HTMLElement {
    constructor() {
        super();
        this.attachShadow({ mode: 'open' });
        this.shadowRoot.innerHTML = `
            <style>
                :host { display: inline-block; flex: none; width: 12px; height: 12px; margin: 0 5px 0 1px; background: #12e0e0; border: 1px solid #111; }
            </style>`;
    }
}

class CadRule extends HTMLElement {
    connectedCallback() {
        this.attachShadow({ mode: 'open' });
        this.shadowRoot.innerHTML = `
            <style>
                :host { display: inline-block; flex: none; width: ${this.getAttribute('w')}px; height: 1px; margin: 0 5px 0 4px; background: #111; }
            </style>`;
    }
}

class CadCombo extends HTMLElement {
    connectedCallback() {
        const muted = this.hasAttribute('muted');
        const small = this.hasAttribute('small');
        this.attachShadow({ mode: 'open' });
        this.shadowRoot.innerHTML = `
            <style>
                :host {
                    display: flex; align-items: center; flex: none; box-sizing: border-box;
                    width: ${this.getAttribute('w')}px; height: 21px; padding: 0 18px 0 ${small ? 19 : muted ? 9 : 1}px;
                    position: relative; background: #fff; border: 1px solid #20262f;
                    font: 12px "Noto Sans", "Noto Sans CJK SC", sans-serif; color: ${muted ? '#8f8f8f' : '#222'};
                    margin-left: ${small ? 0 : .5}px;
                }
                svg { position: absolute; right: 5px; top: 7px; }
            </style>
            <slot></slot>
            <svg width="9" height="6" viewBox="0 0 9 6"><path d="M1 1l3.5 3.5L8 1" fill="none" stroke="${muted ? '#bbb' : '#777'}"/></svg>`;
    }
}

class CadToolbar extends HTMLElement {
    connectedCallback() {
        const second = this.hasAttribute('second');
        this.attachShadow({ mode: 'open' });
        this.shadowRoot.innerHTML = `
            <style>
                :host {
                    display: flex; align-items: center; flex: none; box-sizing: border-box;
                    height: ${second ? 24 : 25}px; width: ${second ? 1121 : 1600}px; padding-left: 4px;
                    ${second ? 'background:#333b48;border:1px solid #2b323d;border-left:0;margin-top:1px;' : 'background:#3b4351;'}
                }
            </style>
            <slot></slot>`;
    }
}

class CadRibbon extends HTMLElement {
    constructor() {
        super();
        this.attachShadow({ mode: 'open' });
        this.shadowRoot.innerHTML = `
            <style>
                :host { display: flex; flex-direction: column; flex: none; height: 53px; background: #434c5a; }
            </style>
            <slot></slot>`;
    }
}

class CadTitlebar extends HTMLElement {
    constructor() {
        super();
        const ic = (n, w = 22) => `<cad-icon name="${n}" size="15" style="width:${w}px"></cad-icon>`;
        this.attachShadow({ mode: 'open' });
        this.shadowRoot.innerHTML = `
            <style>
                :host {
                    display: flex; align-items: center; flex: none; box-sizing: border-box; height: 24px;
                    border-top: 2px solid #0c6b90; background: #1f2530; color: #c9cdd2;
                    font: 11.5px "Noto Sans", "Noto Sans CJK SC", sans-serif; white-space: nowrap;
                }
                .quick { display: flex; align-items: center; width: 567px; height: 100%; flex: none; padding-left: 6px; box-sizing: border-box; }
                .share { color: #8fa8c0; font-size: 11px; margin-left: 3px; }
                .name { width: 147px; flex: none; font-size: 11.6px; }
                .file { flex: none; font-size: 11.2px; }
                .right { position: absolute; left: 1063px; top: 2px; height: 22px; display: flex; align-items: center; }
                .search {
                    width: 164px; height: 18px; margin: 0 4px 0 7px; padding-left: 2px; box-sizing: border-box;
                    background: #465060; color: #98a0aa; font: italic 11px/18px "Noto Sans CJK SC", sans-serif;
                }
                .tri { width: 0; height: 0; border: 3px solid transparent; border-left: 4px solid #c3c8ce; border-right: 0; }
                .user { margin-left: 2px; font-size: 12px; color: #c3c8ce; }
                .vr { width: 1px; height: 17px; background: #3d4552; margin: 0 4px; }
            </style>
            <div class="quick">
                ${ic('logo', 19)}<cad-drop></cad-drop><span style="width:11px"></span>
                ${ic('new')}${ic('open')}${ic('save')}${ic('saveas')}${ic('sheetset')}${ic('mobile')}${ic('print')}
                ${ic('undo')}<cad-drop></cad-drop>${ic('redooff')}<cad-drop></cad-drop><span style="width:3px"></span>${ic('customize', 13)}<span style="width:4px"></span>${ic('share', 20)}
                <span class="share">共享</span>
            </div>
            <span class="name">Autodesk AutoCAD 2022</span>
            <span class="file">住宅小区地暖图纸.dwg</span>
            <div class="right">
                <i class="tri"></i>
                <div class="search">键入关键字或短语</div>
                ${ic('search', 20)}<span style="width:3px"></span>${ic('user', 20)}
                <span class="user">1505999135...</span><cad-drop></cad-drop>
                ${ic('cart', 24)}${ic('anno', 20)}<cad-drop></cad-drop><i class="vr"></i>
                ${ic('help', 24)}<cad-drop></cad-drop>
                <span style="width:56px"></span>
                ${ic('min', 24)}${ic('max', 24)}${ic('close', 22)}
            </div>`;
    }
}

class CadMenubar extends HTMLElement {
    constructor() {
        super();
        const items = [['文件(F)', 16], ['编辑(E)', 73], ['视图(V)', 132], ['插入(I)', 191], ['格式(O)', 246], ['工具(T)', 308], ['绘图(D)', 366], ['标注(N)', 426], ['修改(M)', 487], ['参数(P)', 550], ['窗口(W)', 608], ['帮助(H)', 671], ['Express', 732]];
        const cells = items.map(([t, x], i) => {
            const next = items[i + 1] ? items[i + 1][1] : x + 60;
            return `<span style="width:${next - x}px">${t}</span>`;
        }).join('');
        this.attachShadow({ mode: 'open' });
        this.shadowRoot.innerHTML = `
            <style>
                :host {
                    display: flex; align-items: center; flex: none; box-sizing: border-box; height: 21px; padding-left: 16px;
                    background: #1f2530; color: #aeb3ba; border-bottom: 1px solid #343b47;
                    font: 11.3px "Noto Sans", "Noto Sans CJK SC", sans-serif; white-space: nowrap;
                }
                span { flex: none; }
                .win { margin-left: auto; display: flex; height: 100%; padding-right: 3px; }
            </style>
            ${cells}
            <div class="win">
                <cad-icon name="min" size="13" style="width:17px"></cad-icon>
                <cad-icon name="restore" size="13" style="width:17px"></cad-icon>
                <cad-icon name="close" size="14" style="width:17px"></cad-icon>
            </div>`;
    }
}

class CadTabs extends HTMLElement {
    constructor() {
        super();
        this.attachShadow({ mode: 'open' });
        this.shadowRoot.innerHTML = `
            <style>
                :host {
                    display: flex; align-items: flex-end; flex: none; box-sizing: border-box; height: 25px; padding-left: 21px;
                    background: #1f2530; font: 11px "Noto Sans", "Noto Sans CJK SC", sans-serif; white-space: nowrap;
                }
                .tab { display: flex; align-items: center; height: 22px; box-sizing: border-box; flex: none; }
                .start { width: 116px; padding-left: 12px; background: #2a323e; color: #8d949d; clip-path: polygon(5px 0, 100% 0, 100% 100%, 0 100%); }
                .active { width: 131px; padding-left: 9px; background: #3b4351; color: #e4e6e9; font-weight: 700; clip-path: polygon(8px 0, 123px 0, 100% 100%, 0 100%); }
                .x { margin-left: 8px; width: 10px; height: 10px; }
                .add { width: 20px; margin-left: 7px; height: 19px; background: #2a323e; color: #9aa2ac; justify-content: center; font-size: 15px; clip-path: polygon(4px 0, 100% 0, 16px 100%, 0 100%); }
            </style>
            <div class="tab start">开始</div>
            <div class="tab active">住宅小区地暖图纸*
                <svg class="x" viewBox="0 0 10 10"><path d="M1 1l8 8M9 1l-8 8" stroke="#a9afb7" stroke-width="1.8"/></svg>
            </div>
            <div class="tab add">+</div>`;
    }
}

class CadRail extends HTMLElement {
    connectedCallback() {
        const right = this.hasAttribute('right');
        this.attachShadow({ mode: 'open' });
        this.shadowRoot.innerHTML = `
            <style>
                :host {
                    display: block; flex: none; box-sizing: border-box; height: 100%;
                    ${right ? 'width:45px;padding-left:16px;background:linear-gradient(90deg,#262c36 12px,#3b4351 12px);' : 'width:31px;padding-left:3px;background:linear-gradient(90deg,#1f2530 2px,#3b4351 2px);'}
                }
                .bar { width: 24px; box-sizing: border-box; padding: 5px 0 0; background: #343c49; border: 1px solid #2b323d; position: relative; height: ${right ? 375 : 414}px; margin-top: 1px; }
                .bar::before { content: ''; position: absolute; left: 4px; right: 4px; top: 1px; height: 3px; background: repeating-linear-gradient(90deg, #8d949e 0 1px, transparent 1px 2px); }
                ::slotted(cad-icon) { margin-left: -1px; }
            </style>
            <div class="bar"><slot></slot></div>`;
    }
}

class CadWorkspace extends HTMLElement {
    constructor() {
        super();
        this.attachShadow({ mode: 'open' });
        this.shadowRoot.innerHTML = `
            <style>
                :host { display: flex; flex: none; height: 1022px; background: #3b4351; }
            </style>
            <slot name="left"></slot><slot></slot><slot name="right"></slot>`;
    }
}

class CadDrawing extends HTMLElement {
    constructor() {
        super();
        const zm = pts => pts.map(([x, y]) => `<circle cx="${(530 + x / 3).toFixed(1)}" cy="${(600 + y / 3).toFixed(1)}" r="2.7"/>`).join('');
        const dots = zm([[103, 242], [181, 217], [383, 234], [592, 229], [681, 212], [898, 215], [1009, 199], [1118, 227], [1288, 223], [1396, 229], [284, 272], [503, 264], [725, 262], [804, 245], [910, 257], [960, 274], [1050, 251], [1115, 269], [1361, 270], [159, 407], [416, 407], [433, 467], [542, 524], [720, 407], [715, 442], [924, 534], [1058, 446], [1110, 434], [1318, 503], [1335, 534]]);
        const studs = [662, 717, 773, 827, 882, 937].map(x => [0, 6, 11.5, 17].map(d => `M${x + d} 697V713`).join('')).join('');
        const octagon = (cx, cy, r) => {
            const p = [];
            for (let i = 0; i < 8; i++) p.push(`${(cx + r * Math.cos((i + .5) * Math.PI / 4)).toFixed(1)},${(cy + r * Math.sin((i + .5) * Math.PI / 4)).toFixed(1)}`);
            return `<polygon stroke-width="1.1" points="${p.join(' ')}"/>`;
        };
        const ticks = [361, 471, 663, 697, 714].map(y => `M1159 ${y - 8}L1176 ${y + 9}`).join('');
        const rot = (t, x, y) => `<text class="dim" fill="#22ee22" transform="translate(${x},${y}) rotate(-90) scale(.68,1)" text-anchor="middle">${t}</text>`;
        const tbl = (t, x, y, s = 44, sx = 1, sy = 1.2) => `<text class="thin" transform="translate(${x},${y}) scale(${sx},${sy})" font-size="${s}" text-anchor="middle" dominant-baseline="central">${t}</text>`;
        const vc = (t, x, y) => `<text class="vc" x="${x}" y="${y}" text-anchor="middle" dominant-baseline="central">${t}</text>`;
        this.attachShadow({ mode: 'open' });
        this.shadowRoot.innerHTML = `
            <style>
                :host { display: block; width: 1516px; height: 1011px; }
                svg { display: block; background: #20272f; }
                text { font-family: "Noto Sans CJK SC", "Liberation Sans", sans-serif; }
                .dim { font: 700 31px "Liberation Sans", sans-serif; }
                .label { font-size: 38px; font-weight: 700; fill: #ffff33; }
                .title { font-size: 62.5px; font-weight: 700; fill: #11ee11; }
                .thin { font-weight: 100; fill: #e3e6e9; }
                .vc { font-size: 17px; fill: #8f8f8f; }
                .ax { font-size: 17px; font-weight: 100; fill: #e2e2e2; }
                .corner { font-size: 11.3px; fill: #090b0e; }
            </style>
            <svg width="1516" height="1011" viewBox="35 127 1516 1011">
                <g fill="none" stroke="#7f8388" stroke-width="1.5">
                    <path d="M317 232H658M324 878H461M475 878H681" />
                    <path d="M417 232V878M554 232V713M554 796V878" stroke-width="3"/>
                    <path d="M554 664H1008M554 697H1008M433 713H1008M433 796H1008M1008 546V851" />
                    <path d="M433 713V796" stroke-width="2.5"/>
                    <path d="M472 842L461 886L477 862L474 878" stroke-width="1.3"/>
                    <path d="${studs}" stroke-width="1"/>
                    <path d="M463 232L418 277M547 232L418 361M552 312L418 446M552 393L418 527M552 475L418 609M552 557L418 691M552 639L478 713M433 758L418 773M552 721L544 713M477 796L418 855M552 801L475 878M632 714L550 795M742 714L660 795M852 714L771 795M962 714L881 795" stroke-width="1.1"/>
                    <circle cx="530" cy="768" r="26" stroke-width="1.1"/>
                    ${octagon(615, 759, 15.5)}
                    <circle cx="637" cy="765" r="8" stroke-width="1.1"/><circle cx="643" cy="769" r="8" stroke-width="1.1"/>
                    <circle cx="735" cy="752" r="18" stroke-width="1.1"/><circle cx="749" cy="776" r="7" stroke-width="1.1"/>
                    ${octagon(948, 759, 15.5)}
                </g>
                <path d="M1029 661L1010 685M1029 661L1015 683M990 735L1008 710M990 735L1005 722" fill="none" stroke="#a0a4a8"/>
                <g fill="none" stroke="#a31f1f" stroke-width="2.2">
                    <path d="M575 420V640L583 664M595 420V640L604 663M610 530V640L620 664M630 530V640L640 664" />
                </g>
                <path d="M584 411V640C585 668 600 689 624 689H1015M584 349V377" fill="none" stroke="#ffb90f" stroke-width="13"/>
                <path d="M621 520V640L632 672M621 458V486" fill="none" stroke="#ffb90f" stroke-width="13"/>
                <g fill="#878b90">${dots}</g>
                <g fill="none" stroke="#ffff44" stroke-width="1.3">
                    <path d="M444 153V232M554 153V232M444 169H554M435 177L452 161M546 177L562 161" />
                    <path d="M544 339H682M583 302V349M546 448H682M620 413V458" />
                    <path d="M531 1017H1093" stroke="#d8d820" stroke-width="1.5"/>
                </g>
                <path d="M531 1003H1093" stroke="#ffff22" stroke-width="8"/>
                <g fill="none" stroke="#22dd33" stroke-width="2">
                    <circle cx="583" cy="339" r="10" stroke-width="2.5"/><circle cx="620" cy="449" r="10" stroke-width="2.5"/>
                    <path d="M575 377H593L575 411H593Z" stroke-width="1.5"/>
                    <path d="M612 486H630L612 520H630Z" stroke-width="1.5"/>
                </g>
                <g fill="none" stroke="#22b83a" stroke-width="1.4">
                    <path d="M807 711L903 507H1015M881 627L918 663L954 627M881 627H992" />
                    <path d="M1167 281V796M1077 361H1192M1077 471H1192M1077 663H1190M1077 697H1190M1077 714H1190" stroke="#22c533"/>
                </g>
                <path d="${ticks}" stroke="#9fd8a6" fill="none"/>
                <text class="dim" fill="#ffff33" transform="translate(494,162) scale(.68,1)" text-anchor="middle">200</text>
                ${rot('180', 1159, 423)}${rot('300', 1159, 545)}${rot('50', 1159, 676)}${rot('20', 1158, 732)}
                <text class="label" x="919" y="498">隔热层</text>
                <text class="label" x="903" y="614">地面标高</text>
                <text class="title" transform="translate(609,992) scale(1,1.27)">分集水器侧视图</text>
                <rect x="659" y="595" width="1.5" height="1.5" fill="#fff"/>

                <g fill="none" stroke="#f2f3f5">
                    <path d="M1397 132H1473L1493 132L1525 127" stroke-width="4"/>
                    <path d="M1397 142H1493L1551 129" stroke-width="2"/>
                    <path d="M1397 154H1473L1495 154L1551 139" stroke-width="4"/>
                    <path d="M1397 286H1500L1551 300" stroke-width="4"/>
                    <path d="M1397 297H1493L1551 311" stroke-width="2"/>
                    <path d="M1397 308H1473L1493 308L1551 322" stroke-width="4"/>
                    <path d="M1397 127V217L1409 221L1384 228L1397 232V333" stroke-width="1.3" stroke="#e0e3e6"/>
                    <path d="M1445 127V1100" stroke-width="1.5" stroke="#c8cbce"/>
                </g>
                <g fill="none" stroke="#e9ebee" stroke-width="1.2">
                    <path d="M1469 681H1551M1469 742H1551M1469 803H1551M1469 863H1551M1469 926H1551M1469 988H1551M1469 1049H1551M1469 1112H1551M1469 681V1138" />
                </g>
                ${tbl('面', 1524, 707, 40)}${tbl('水', 1525, 769)}${tbl('细', 1508, 824, 38)}${tbl('石', 1553, 824, 38)}
                ${tbl('P', 1507, 887, 70, .55, 1)}${tbl('E', 1545, 887, 70, .55, 1)}
                ${tbl('钢', 1488, 961)}${tbl('丝', 1532, 960)}${tbl('铝', 1490, 1023)}${tbl('箔', 1534, 1022)}
                ${tbl('苯', 1488, 1087)}${tbl('板', 1530, 1086)}${tbl('耗', 1542, 1130, 36)}

                <circle cx="1478" cy="199" r="50" fill="none" stroke="#474b51" stroke-width="13"/>
                <rect x="1454" y="175" width="47" height="48" fill="#a8a8a8"/>
                <rect x="1463" y="185" width="30" height="28" fill="#b6b6b6"/>
                <text x="1478" y="199" font-size="26" text-anchor="middle" dominant-baseline="central" fill="#6a6a6a" font-weight="100">上</text>
                ${vc('北', 1478, 146)}${vc('西', 1426, 199)}${vc('东', 1529, 199)}${vc('南', 1478, 253)}
                <rect x="1456" y="281" width="43" height="15" rx="4" fill="#9a9aa6"/>
                <text x="1477" y="293" font-size="12" fill="#6f7079" text-anchor="middle" style="font-family:'Liberation Sans'">WCS</text>

                <path d="M36 1105H1551" stroke="#f2f3f5" stroke-width="1.3"/>
                <rect x="1440.5" y="1100.5" width="10" height="10" fill="#20272f" stroke="#e9ebee"/>
                <g fill="none" stroke="#d8d8d8">
                    <path d="M55 1073V1113" stroke-width="2" stroke="#b0b0b0"/>
                    <path d="M60 1118H100M55 1113V1118H60"/>
                    <rect x="51.5" y="1113.5" width="8" height="8"/>
                </g>
                <text class="ax" x="62" y="1068" text-anchor="middle">Y</text>
                <text class="ax" x="111" y="1117" text-anchor="middle">X</text>
                <text class="corner" x="0" y="0" transform="translate(36,140)">[+][俯视][二维线框]</text>
            </svg>`;
    }
}

class CadViewport extends HTMLElement {
    constructor() {
        super();
        this.attachShadow({ mode: 'open' });
        this.shadowRoot.innerHTML = `
            <style>
                :host { display: block; flex: none; box-sizing: border-box; width: 1524px; height: 1021px; border: 4px solid #1473d8; border-bottom-width: 5px; overflow: hidden; }
            </style>
            <cad-drawing></cad-drawing>`;
    }
}

class CadCommand extends HTMLElement {
    constructor() {
        super();
        this.attachShadow({ mode: 'open' });
        this.shadowRoot.innerHTML = `
            <style>
                :host { display: grid; grid-template-columns: 27px 1fr; flex: none; height: 52px; width: 1596px; background: #1f2530; font-family: "Noto Sans CJK SC", sans-serif; }
                .side { display: flex; flex-direction: column; align-items: center; padding-top: 3px; background: #1f2530; }
                .side i { width: 16px; height: 5px; background: repeating-linear-gradient(90deg, #d9dce1 0 1px, transparent 1px 2px); margin-bottom: 4px; }
                .main { display: flex; flex-direction: column; }
                .log { height: 26px; margin-top: 1px; background: #c8c8c8; border-bottom: 1px solid #6c6f74; color: #202020; font-size: 15px; line-height: 26px; padding-left: 3px; white-space: pre; }
                .input { display: flex; align-items: center; height: 23px; margin-top: 1px; background: #fff; color: #9c9c9c; font-size: 16px; font-style: italic; padding-left: 3px; --drop: #666; }
                .input span { margin-left: 3px; }
            </style>
            <div class="side">
                <i></i>
                <cad-icon name="close" size="13" style="height:22px"></cad-icon>
                <cad-icon name="wrench" size="15" style="height:22px"></cad-icon>
            </div>
            <div class="main">
                <div class="log">命令：  *取消*</div>
                <div class="input">
                    <cad-icon name="consoleicon" size="15" style="height:100%;width:18px"></cad-icon><cad-drop></cad-drop>
                    <span>键入命令</span>
                </div>
            </div>`;
    }
}

class CadStatusGroup extends HTMLElement {
    connectedCallback() {
        this.attachShadow({ mode: 'open' });
        this.shadowRoot.innerHTML = `
            <style>
                :host { display: flex; align-items: center; justify-content: space-around; flex: none; box-sizing: border-box; width: ${this.getAttribute('w')}px; height: 23px; margin-right: ${this.getAttribute('gap') || 3}px; background: #353e4b; color: #d9dce1; font: 11px "Noto Sans", "Noto Sans CJK SC", sans-serif; }
                ::slotted([on]) { background: #5b8fc0; }
            </style>
            <slot></slot>`;
    }
}

class CadStatus extends HTMLElement {
    constructor() {
        super();
        const b = (n, on) => `<cad-icon name="${n}" size="15" style="width:20px" ${on ? 'on' : ''}></cad-icon>`;
        const d = '<cad-drop></cad-drop>';
        this.attachShadow({ mode: 'open' });
        this.shadowRoot.innerHTML = `
            <style>
                :host {
                    display: flex; flex: none; box-sizing: border-box; height: 30px; padding-top: 1px; position: relative;
                    background: #1f2530; border-bottom: 2px solid #0c6b90;
                    font: 11.5px "Noto Sans", "Noto Sans CJK SC", sans-serif;
                }
                .tabs { display: flex; align-items: flex-start; height: 16px; padding-left: 15px; width: 1024px; flex: none; box-sizing: border-box; }
                .tab { display: flex; align-items: center; justify-content: center; height: 16px; background: #2f3744; color: #aeb4bc; clip-path: polygon(0 0, 100% 0, calc(100% - 5px) 100%, 5px 100%); }
                .groups { display: flex; align-items: flex-start; }
            </style>
            <div class="tabs">
                <div class="tab" style="width:40px;background:#3b4351;color:#e9ebee;font-weight:700">模型</div>
                <div class="tab" style="width:46px;margin-left:5px">布局1</div>
                <div class="tab" style="width:20px;margin-left:4px;font-size:15px">+</div>
            </div>
            <div class="groups" style="margin-left:15px">
                <cad-status-group w="26" gap="4">模型</cad-status-group>
                <cad-status-group w="59">${b('grid')}${b('snap')}${d}</cad-status-group>
                <cad-status-group w="95">${b('ortho')}${b('polar')}${d}${b('track')}${d}</cad-status-group>
                <cad-status-group w="58" gap="2">${b('angle')}${b('osnap', 1)}${d}</cad-status-group>
                <cad-status-group w="22">${b('lw')}</cad-status-group>
                <cad-status-group w="97">${b('annoA', 1)}${b('annoB')}${b('annoC')}<span>1:1</span>${d}</cad-status-group>
                <cad-status-group w="60" gap="2">${b('gear')}${d}${b('plus')}</cad-status-group>
                <cad-status-group w="23">${b('wspace')}</cad-status-group>
                <cad-status-group w="45">${b('iso')}${b('warn')}</cad-status-group>
                <cad-status-group w="45" gap="0">${b('full')}${b('menu')}</cad-status-group>
            </div>`;
    }
}

class CadWatermark extends HTMLElement {
    constructor() {
        super();
        const spots = [[18, 388], [566, 378], [1122, 378], [-130, 745], [421, 745], [972, 745], [1528, 735], [271, 1112], [822, 1112], [1373, 1112]];
        const marks = spots.map(([x, y]) => `<text class="mark" transform="translate(${x},${y}) rotate(-45)">知末网 www.znzmo.com</text>`).join('');
        this.attachShadow({ mode: 'open' });
        this.shadowRoot.innerHTML = `
            <style>
                :host { position: absolute; left: 0; top: 0; width: 1600px; height: 1227px; pointer-events: none; }
                svg { display: block; }
                .mark { font: 37px "Liberation Sans", "Noto Sans CJK SC", sans-serif; fill: #fff; fill-opacity: .08; }
                .big { font: 700 62px "Noto Sans CJK SC", sans-serif; fill: #fff; fill-opacity: .75; stroke: #8a8f96; stroke-width: 1; }
                .id { font: 32px "Liberation Sans", sans-serif; fill: #fff; fill-opacity: .75; stroke: #85888c; stroke-width: 1; }
            </style>
            <svg width="1600" height="1227">
                ${marks}
                <text class="big" x="1407" y="1150" textLength="124">知末</text>
                <text class="id" x="1362" y="1198">ID: 1160513386</text>
            </svg>`;
    }
}

class CadApp extends HTMLElement {
    constructor() {
        super();
        this.attachShadow({ mode: 'open' });
        this.shadowRoot.innerHTML = `
            <style>
                :host { display: flex; flex-direction: column; position: relative; width: 1600px; height: 1227px; overflow: hidden; background: #1f2530; }
            </style>
            <slot></slot>`;
    }
}

customElements.define('cad-icon', CadIcon);
customElements.define('cad-drop', CadDrop);
customElements.define('cad-sep', CadSep);
customElements.define('cad-grip', CadGrip);
customElements.define('cad-swatch', CadSwatch);
customElements.define('cad-rule', CadRule);
customElements.define('cad-combo', CadCombo);
customElements.define('cad-toolbar', CadToolbar);
customElements.define('cad-ribbon', CadRibbon);
customElements.define('cad-titlebar', CadTitlebar);
customElements.define('cad-menubar', CadMenubar);
customElements.define('cad-tabs', CadTabs);
customElements.define('cad-rail', CadRail);
customElements.define('cad-workspace', CadWorkspace);
customElements.define('cad-drawing', CadDrawing);
customElements.define('cad-viewport', CadViewport);
customElements.define('cad-command', CadCommand);
customElements.define('cad-status-group', CadStatusGroup);
customElements.define('cad-status', CadStatus);
customElements.define('cad-watermark', CadWatermark);
customElements.define('cad-app', CadApp);
</script>
</body>
</html>
